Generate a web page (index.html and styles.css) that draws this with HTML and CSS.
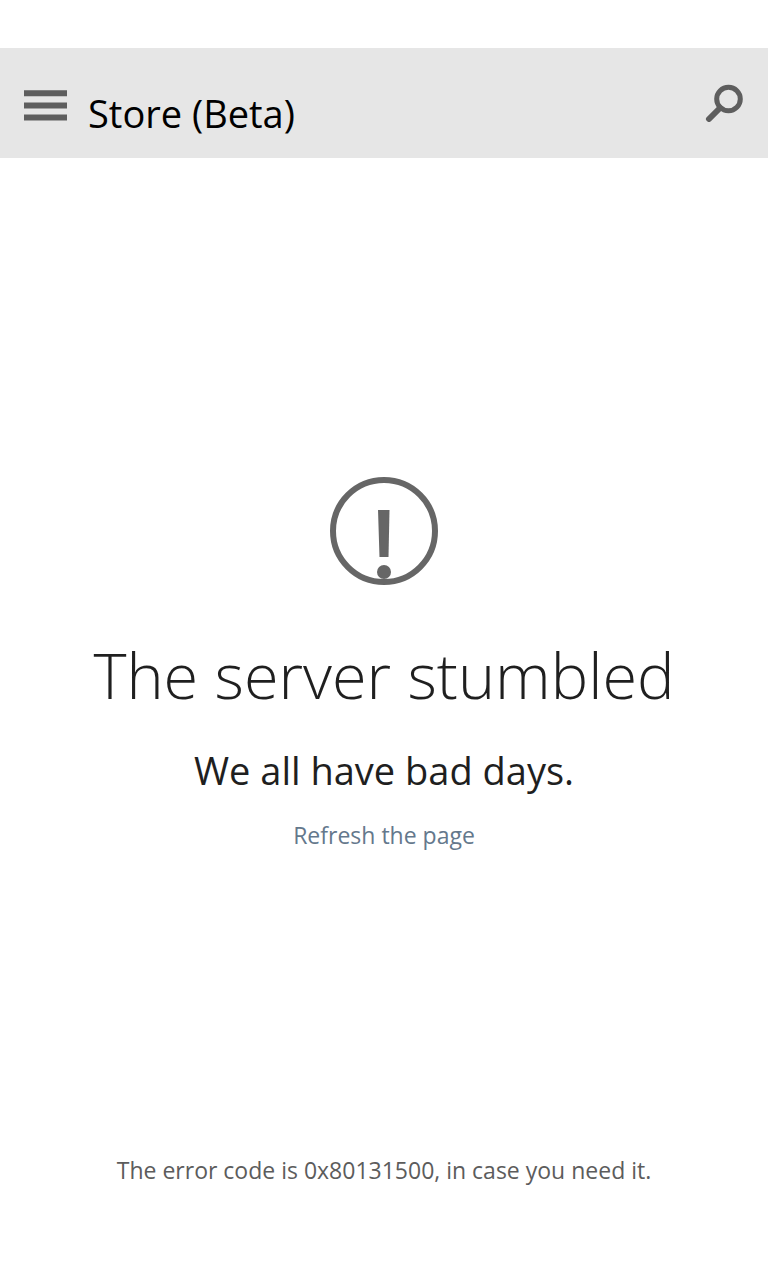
FILE: index.html
```html
<!DOCTYPE html>
<html lang="en">
<head>
<meta charset="UTF-8" />
<meta name="viewport" content="width=device-width, initial-scale=1" />
<title>Store (Beta)</title>
<link rel="stylesheet" href="styles.css">
</head>
<body>
  <header class="app-bar">
    <button class="icon-btn" type="button" aria-label="Menu">
      <svg class="menu-icon" viewBox="0 0 43 36" aria-hidden="true">
        <path d="M0 5.300h43v6H0zM0 17.400h43v6H0zM0 29.500h43v6H0z" />
      </svg>
    </button>
    <h1 class="app-title">Store (Beta)</h1>
    <button class="icon-btn" type="button" aria-label="Search">
      <svg class="search-icon" viewBox="0 0 38 38" aria-hidden="true">
        <circle cx="23.500" cy="15" r="11.800" />
        <line x1="15" y1="24" x2="4" y2="35" />
      </svg>
    </button>
  </header>

  <main class="error-page">
    <svg class="error-icon" viewBox="0 0 108 108" aria-hidden="true">
      <circle class="ring" cx="54" cy="54" r="51" />
      <path d="M48 33h11.500l-1 47h-9z" />
      <circle cx="54" cy="95" r="7" />
    </svg>
    <h2 class="error-title">The server stumbled</h2>
    <p class="error-text">We all have bad days.</p>
    <a class="refresh-link" href="#">Refresh the page</a>
  </main>

  <footer class="error-code">The error code is 0x80131500, in case you need it.</footer>
</body>
</html>
```
FILE: styles.css
```css
* {
  box-sizing: border-box;
}

body {
  margin: 0;
  min-height: 100vh;
  padding-top: 48px;
  display: flex;
  flex-direction: column;
  font-family: "Open Sans", "Noto Sans", sans-serif;
  background: #fff;
  color: #1f1f1f;
}

.app-bar {
  display: flex;
  align-items: center;
  height: 110px;
  padding: 0 24px;
  background: #e6e6e6;
}

.icon-btn {
  display: flex;
  padding: 0;
  border: none;
  background: none;
  cursor: pointer;
}

.menu-icon {
  width: 43px;
  height: 36px;
  fill: #5e5e5e;
}

.search-icon {
  width: 38px;
  height: 38px;
  margin-right: 1px;
  fill: none;
  stroke: #5e5e5e;
  stroke-width: 5;
  stroke-linecap: round;
}

.search-icon line {
  stroke-width: 6;
}

.app-title {
  flex: 1;
  margin: 0;
  padding: 20px 0 0 21px;
  font-size: 38px;
  line-height: 48px;
  font-weight: 400;
  color: #000;
}

.error-page {
  flex: 1;
  display: flex;
  flex-direction: column;
  align-items: center;
  justify-content: center;
  padding-top: 16px;
  text-align: center;
}

.error-icon {
  width: 108px;
  height: 108px;
  fill: #666;
}

.error-icon .ring {
  fill: none;
  stroke: #666;
  stroke-width: 6;
}

.error-title {
  margin: 48px 0 0;
  font-size: 63px;
  line-height: 84px;
  font-weight: 300;
}

.error-text {
  margin: 25px 0 0;
  font-size: 38px;
  line-height: 56px;
}

.refresh-link {
  margin-top: 21px;
  font-size: 23px;
  line-height: 32px;
  color: #64788c;
  text-decoration: none;
}

.error-code {
  padding: 0 24px 94px;
  font-size: 23px;
  line-height: 32px;
  text-align: center;
  color: #5c5c5c;
}
```
